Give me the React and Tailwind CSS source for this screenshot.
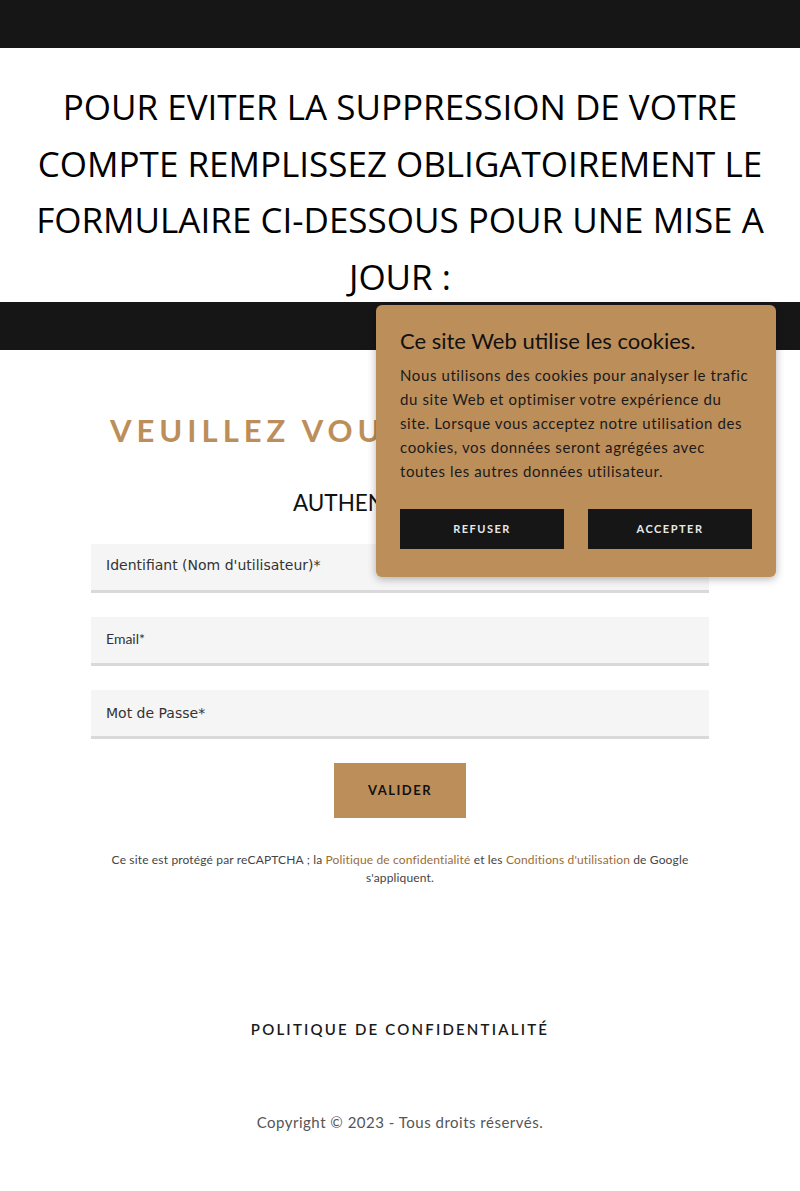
export default function App() {
  const josefin = { fontFamily: "Lato, 'Open Sans', sans-serif" };
  return (
    <div className="relative w-full bg-white" style={{ minHeight: 1191 }}>
      <div className="h-[48px] bg-[#161616]" />
      <div className="h-[254px] pt-[31px] px-[10px]">
        <h1
          className="text-center text-[35px] leading-[56.7px] font-medium text-[#000] tracking-[0px]"
          style={{ fontFamily: "'Open Sans', sans-serif" }}
        >
          POUR EVITER LA SUPPRESSION DE VOTRE
          <br />
          COMPTE REMPLISSEZ OBLIGATOIREMENT LE
          <br />
          FORMULAIRE CI-DESSOUS POUR UNE MISE A
          <br />
          JOUR :
        </h1>
      </div>
      <div className="relative h-[48px] bg-[#161616]" />

      <div className="mx-auto w-[618px] pt-[62px]" style={josefin}>
        <h2 className="ml-[19px] text-[31px] leading-[36px] font-bold tracking-[5px] text-[#bc8e5a]">
          VEUILLEZ VOUS IDENTIFIER
        </h2>
        <h3 className="mt-[41px] text-center text-[22.5px] leading-[28px] text-[#111]">
          AUTHENTIFICATION
        </h3>
        <div className="mt-[27px] flex flex-col gap-[24px]">
          <div className="h-[49px] bg-[#f5f5f5] border-b-[3px] border-[#d9d9d9] flex items-center px-[15px] pb-[3px]">
            <span className="text-[14px] text-[#333]" style={{ fontFamily: "'DejaVu Sans', sans-serif" }}>
              Identifiant (Nom d'utilisateur)*
            </span>
          </div>
          <div className="h-[49px] bg-[#f5f5f5] border-b-[3px] border-[#d9d9d9] flex items-center px-[15px] pb-[3px]">
            <span className="text-[14px] text-[#333]" style={{ fontFamily: "Lato, sans-serif" }}>
              Email*
            </span>
          </div>
          <div className="h-[49px] bg-[#f5f5f5] border-b-[3px] border-[#d9d9d9] flex items-center px-[15px]">
            <span className="text-[14px] text-[#333]" style={{ fontFamily: "'DejaVu Sans', sans-serif" }}>
              Mot de Passe*
            </span>
          </div>
        </div>
        <div className="mt-[24px] flex justify-center">
          <button className="w-[132px] h-[55px] bg-[#bc8e5a] text-[13px] font-bold tracking-[1.5px] text-[#111]">
            VALIDER
          </button>
        </div>
        <p className="mt-[33px] text-center text-[12px] leading-[18px] tracking-[0.15px] text-[#444]">
          Ce site est protégé par reCAPTCHA ; la{" "}
          <span className="text-[#9b6b36]">Politique de confidentialité</span> et les{" "}
          <span className="text-[#9b6b36]">Conditions d'utilisation</span> de Google
          <br />
          s'appliquent.
        </p>
        <div className="mt-[131px] text-center text-[15px] font-semibold tracking-[2.2px] text-[#1a1a1a]">
          POLITIQUE DE CONFIDENTIALITÉ
        </div>
        <div className="mt-[70px] text-center text-[15px] tracking-[0.5px] text-[#555]">
          Copyright © 2023 - Tous droits réservés.
        </div>
      </div>

      <div
        className="absolute left-[376px] top-[305px] w-[400px] h-[272px] rounded-[6px] bg-[#bc8e5a] shadow-[0_2px_8px_rgba(0,0,0,0.3)] px-[24px] pt-[22px]"
        style={josefin}
      >
        <div className="text-[22px] leading-[28px] text-[#111]">Ce site Web utilise les cookies.</div>
        <p className="mt-[8px] text-[15px] leading-[24px] tracking-[0.6px] text-[#1a1a1a] whitespace-nowrap">
          Nous utilisons des cookies pour analyser le trafic
          <br />
          du site Web et optimiser votre expérience du
          <br />
          site. Lorsque vous acceptez notre utilisation des
          <br />
          cookies, vos données seront agrégées avec
          <br />
          toutes les autres données utilisateur.
        </p>
        <div className="mt-[26px] flex gap-[24px]">
          <button className="w-[164px] h-[40px] bg-[#161616] text-[11px] font-bold tracking-[1.5px] text-[#e8e8e8]">
            REFUSER
          </button>
          <button className="w-[164px] h-[40px] bg-[#161616] text-[11px] font-bold tracking-[1.5px] text-[#e8e8e8]">
            ACCEPTER
          </button>
        </div>
      </div>
    </div>
  );
}
